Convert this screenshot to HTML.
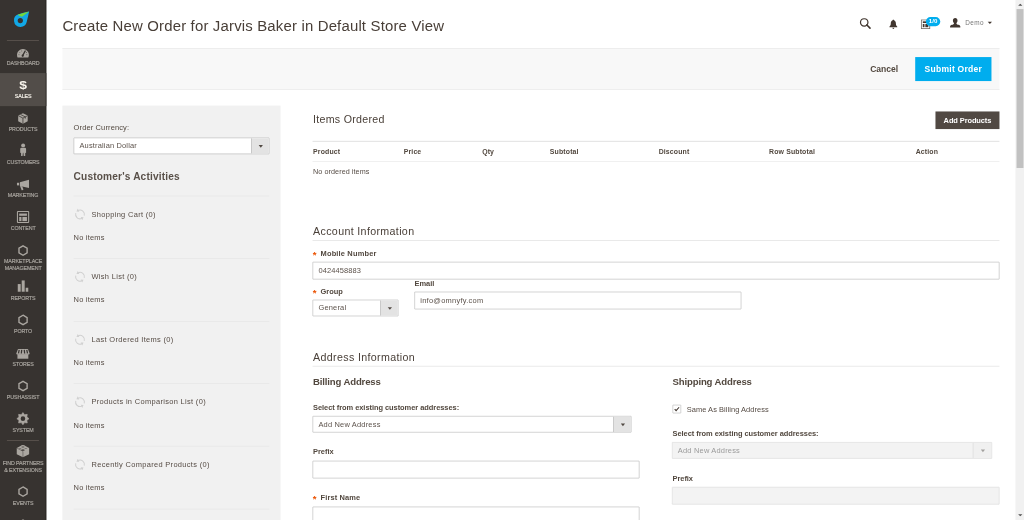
<!DOCTYPE html>
<html lang="en">
<head>
<meta charset="utf-8">
<title>Create New Order / Orders / Operations / Sales / Magento Admin</title>
<style>
*{box-sizing:border-box;margin:0;padding:0}
html,body{width:1024px;height:520px;overflow:hidden;background:#fff}
body{font-family:"Liberation Sans",Arial,sans-serif;color:#41362f}
#stage{position:absolute;left:0;top:0;width:1920px;height:975px;overflow:hidden;transform:scale(.533333);transform-origin:0 0;mix-blend-mode:multiply;background:#fff;font-size:14px;line-height:1.36}

/* ---------- left menu ---------- */
.menu{position:absolute;left:0;top:0;width:86.600px;height:975px;background:#373330}
.menu:after{content:"";position:absolute;right:0;top:0;width:2px;height:975px;background:rgba(20,16,14,.35);z-index:3}
.logo{display:block;height:75px;position:relative}
.logo svg{position:absolute;left:0;top:0}
.menu ul{list-style:none}
.menu li{position:relative}
.menu li a{display:block;min-height:62px;padding:12px 0 4.500px;text-align:center;color:#aaa6a0;font-size:10px;line-height:13.6px;letter-spacing:-.25px;-webkit-text-stroke:.3px currentColor;text-transform:uppercase;text-decoration:none;white-space:nowrap}
.menu li a .ic{display:block;height:24.5px;margin:0 auto}
.menu li a .ic svg{display:block;margin:0 auto}
.menu li.sep:before{content:"";position:absolute;left:13.300px;top:0;width:60px;height:1px;background:#736963}
.menu li.on a{background:#524d49;color:#f7f3eb}
.menu li.fp a{padding-bottom:10.300px}

/* ---------- page ---------- */
.page{position:absolute;left:117px;top:0;width:1757px}
.hdr{height:90px;position:relative}
.hdr h1{position:absolute;left:0;top:29.500px;font-size:28px;font-weight:400;line-height:38px;color:#483e37;letter-spacing:.32px;white-space:nowrap}
.hi{position:absolute;top:0}
.actions{height:78px;background:#f8f8f8;border-top:1px solid #e3e3e3;border-bottom:1px solid #e3e3e3;position:relative}
.btn-submit{position:absolute;right:15px;top:16px;width:143px;height:45px;background:#00adee;color:#fff;font-size:16px;font-weight:700;line-height:45px;text-align:center;letter-spacing:.48px}
.btn-cancel{position:absolute;right:190px;top:16px;height:45px;line-height:45px;font-size:16px;font-weight:700;color:#52483f}

.side{position:absolute;left:0;top:198px;width:409px;height:800px;background:#f1f1f1;padding:0 21px}
.main{position:absolute;left:469px;top:198px;width:1288px}

/* ---------- generic controls ---------- */
.abs{position:absolute;white-space:nowrap}
.lbl{position:absolute;white-space:nowrap;font-size:14px;font-weight:700;line-height:20px;color:#52483f;letter-spacing:-.1px}
.lbl .req{color:#eb5202;font-weight:700;font-size:18px;line-height:10px;display:inline-block;width:14px;position:relative;top:3.800px;left:-.500px;letter-spacing:0}
.txt{position:absolute;white-space:nowrap;font-size:14px;line-height:20px;color:#564c45;letter-spacing:.35px}
.inp{position:absolute;height:33px;background:#fff;border:1px solid #adadad;border-radius:1px;font-size:14px;line-height:31px;padding:0 10px;color:#5c524b;white-space:nowrap;overflow:hidden;letter-spacing:.3px}
.sel{position:absolute;height:30.400px;margin-top:.400px;background:#fff;border:1px solid #adadad;border-radius:1px;font-size:14px;line-height:28.400px;padding:0 10px;color:#5c524b;white-space:nowrap;overflow:hidden;letter-spacing:.35px}
.sel:after{content:"";position:absolute;right:0;top:0;width:32px;height:28.400px;background:#e3e3e3;border-left:1px solid #adadad}
.sel:before{content:"";position:absolute;right:11.500px;top:12.600px;z-index:2;border:4.500px solid transparent;border-top:5.400px solid #514943;border-bottom:0}
.dis{background:#f3f3f3;color:#9a9a9a;border-color:#d4d4d4}
.dis:after{background:#f0f0f0;border-left-color:#d4d4d4;width:33.500px}
.dis:before{border-top-color:#a3a19f}
.h2{position:absolute;white-space:nowrap;font-size:20px;font-weight:400;line-height:28px;color:#4a4039}
.h3{position:absolute;white-space:nowrap;font-size:18px;font-weight:700;line-height:26px;color:#52483f;letter-spacing:-.3px;margin-top:-1px}
.hr{position:absolute;left:0;right:0;height:1px;background:#d6d6d6}

.main .lbl,.main .h2,.main .h3,.main .th,.main .txt{margin-left:1px}
/* side */
.side .sh{position:absolute;left:21px;white-space:nowrap;font-size:19px;font-weight:700;line-height:26px;letter-spacing:.3px;color:#595049}
.side .dv{position:absolute;left:21px;width:367px;height:1px;background:#e3e3e3}
.side .it{position:absolute;left:54.500px;margin-top:-1px;font-size:14px;line-height:20px;white-space:nowrap;color:#564c45;letter-spacing:.6px}
.side .no{position:absolute;left:21px;font-size:14px;line-height:20px;white-space:nowrap;color:#564c45;letter-spacing:.38px}
.side .sp{position:absolute;left:23px;width:20px;height:20px}

/* table */
.th{position:absolute;top:76.300px;font-size:13px;font-weight:700;line-height:20px;white-space:nowrap;color:#52483f;letter-spacing:.25px}
.btn-add{position:absolute;right:0;top:11px;width:120px;height:33px;background:#514943;color:#fff;font-size:14px;font-weight:700;line-height:33px;text-align:center;letter-spacing:-.2px}
.chk{position:absolute;width:16px;height:16px;background:#fff;border:1px solid #adadad;border-radius:1px}

/* header icons + scrollbar (stage coordinates) */
.hic{position:absolute}
.badge{position:absolute;left:1736px;top:31.5px;width:27px;height:17px;border-radius:9px;background:#00adee;color:#fff;font-size:11.500px;font-weight:700;line-height:17.500px;text-align:center;letter-spacing:.1px}
.user{position:absolute;left:1810px;top:33px;font-size:12px;line-height:18px;color:#777;white-space:nowrap;letter-spacing:.75px}
.caret{position:absolute;left:1851.5px;top:41px;border:4.2px solid transparent;border-top:4.6px solid #41362f;border-bottom:0}
.sb{position:absolute;left:1904px;top:0;width:16px;height:975px;background:#f1f1f1}
.sb i{position:absolute;left:2.400px;top:17px;width:13px;height:298px;background:#c1c1c1}
.sb b{position:absolute;left:4.800px;width:0;height:0;border:4.200px solid transparent}
.sb b.up{border-bottom:4.600px solid #505050;border-top:0;top:6.800px}
.sb b.dn{top:964px;border-top:4.600px solid #505050;border-bottom:0}
</style>
</head>
<body>
<div id="stage">

<nav class="menu">
  <a class="logo">
    <svg width="87" height="75" viewBox="0 0 87 75">
      <path d="M54.600 21.500Q44 24 34.800 26.800A12.100 12.100 0 1 0 50.200 40.800Q52.600 31 54.600 21.500Z" fill="#12a8e6"/>
      <path d="M54.600 21.500Q43.500 24.200 33.200 27.600Q36.500 30.800 41.200 31.200Q48 26.800 54.600 21.500Z" fill="#74d83c"/>
      <circle cx="38.100" cy="38.600" r="4.900" fill="#373330"/>
    </svg>
  </a>
  <ul>
    <li class="sep"><a><span class="ic"><svg width="87" height="26" viewBox="0 12 87 26" overflow="visible"><path d="M33 32.900A11.100 11.100 0 1 1 53 32.900Z" fill="currentColor"/><path d="M42.3 29.6L47.2 20.6" stroke="#373330" stroke-width="2.6" stroke-linecap="round"/><circle cx="42.6" cy="29.4" r="2.1" fill="#373330"/><g fill="#373330"><circle cx="35.6" cy="27.6" r=".9"/><circle cx="37.2" cy="23.2" r=".9"/><circle cx="40.6" cy="20.4" r=".9"/><circle cx="50.4" cy="27.6" r=".9"/><circle cx="49.6" cy="23.6" r=".9"/></g></svg></span>Dashboard</a></li>
    <li class="on"><a><span class="ic"><svg width="87" height="26" viewBox="0 12 87 26" overflow="visible"><text x="36.200" y="30.700" textLength="14.200" lengthAdjust="spacingAndGlyphs" font-family="Liberation Sans,Arial,sans-serif" font-weight="700" font-size="21.500" fill="currentColor">$</text></svg></span>Sales</a></li>
    <li><a><span class="ic"><svg width="87" height="26" viewBox="0 12 87 26" overflow="visible"><g transform="translate(43 23) scale(.92) translate(-43 -23)"><path d="M43 12.3L52.7 17.3V28.6L43 33.7L33.3 28.6V17.3Z" fill="currentColor"/><path d="M33.3 17.3L43 22.4L52.7 17.3M43 22.4V33.7" fill="none" stroke="#373330" stroke-width="1.5"/><path d="M38 14.9L47.8 19.9V23.4" fill="none" stroke="#373330" stroke-width="1.5"/></g></svg></span>Products</a></li>
    <li><a><span class="ic"><svg width="87" height="26" viewBox="0 12 87 26" overflow="visible"><circle cx="43.4" cy="11.6" r="3.7" fill="currentColor"/><path d="M37.900 18.600Q37.900 16.100 40.400 16.100H46.400Q48.900 16.100 48.900 18.600V25.200L47.300 25.800V31.700H44.500L43.800 25.600H43L42.300 31.700H39.500V25.800L37.900 25.200Z" fill="currentColor"/></svg></span>Customers</a></li>
    <li><a><span class="ic"><svg width="87" height="26" viewBox="0 12 87 26" overflow="visible"><path d="M37.3 18.9L54.4 14.2V29.6L37.3 25.9Z" fill="currentColor"/><path d="M31.8 19.7H35.9V24.6H31.8Z" fill="currentColor"/><path d="M37.6 25.6L41.6 26.4L44 32.4Q43.2 33.8 40.6 33.6Z" fill="currentColor"/></svg></span>Marketing</a></li>
    <li><a><span class="ic"><svg width="87" height="26" viewBox="0 12 87 26" overflow="visible"><rect x="32.7" y="11.6" width="21" height="20.7" rx="1" fill="none" stroke="currentColor" stroke-width="2"/><rect x="36" y="15.4" width="14.5" height="4.2" fill="currentColor"/><rect x="36" y="21.8" width="4.2" height="7.8" fill="currentColor"/><rect x="42" y="21.8" width="8.5" height="7.8" fill="currentColor"/></svg></span>Content</a></li>
    <li><a><span class="ic"><svg width="87" height="26" viewBox="0 12 87 26" overflow="visible"><path d="M43.20 14.00 L50.82 18.40 L50.82 27.20 L43.20 31.60 L35.58 27.20 L35.58 18.40Z" fill="none" stroke="currentColor" stroke-width="2.600" stroke-linejoin="miter"/></svg></span>Marketplace<br>Management</a></li>
    <li><a><span class="ic"><svg width="87" height="26" viewBox="0 12 87 26" overflow="visible"><rect x="33.3" y="17.6" width="5.5" height="14.4" fill="currentColor"/><rect x="40.7" y="10.8" width="5.6" height="21.2" fill="currentColor"/><rect x="48.2" y="24.5" width="4.8" height="7.5" fill="currentColor"/></svg></span>Reports</a></li>
    <li><a><span class="ic"><svg width="87" height="26" viewBox="0 12 87 26" overflow="visible"><path d="M43.20 14.00 L50.82 18.40 L50.82 27.20 L43.20 31.60 L35.58 27.20 L35.58 18.40Z" fill="none" stroke="currentColor" stroke-width="2.600" stroke-linejoin="miter"/></svg></span>Porto</a></li>
    <li><a><span class="ic"><svg width="87" height="26" viewBox="0 12 87 26" overflow="visible"><g transform="translate(0 2)"><path d="M33.800 13.200H52.400L55.600 22Q55.600 23.800 53.600 23.800H32.400Q30.500 23.800 30.500 22Z" fill="currentColor"/><path d="M32.700 23H53.100V31.600H32.700Z" fill="currentColor"/><path d="M36 15L34.600 21.800M40.700 15L40 21.800M45.500 15L46.200 21.800M50.200 15L51.600 21.800" stroke="#373330" stroke-width="2.300"/></g></svg></span>Stores</a></li>
    <li><a><span class="ic"><svg width="87" height="26" viewBox="0 12 87 26" overflow="visible"><path d="M43.20 14.00 L50.82 18.40 L50.82 27.20 L43.20 31.60 L35.58 27.20 L35.58 18.40Z" fill="none" stroke="currentColor" stroke-width="2.600" stroke-linejoin="miter"/></svg></span>PushAssist</a></li>
    <li><a><span class="ic"><svg width="87" height="26" viewBox="0 12 87 26" overflow="visible"><path d="M43.00 10.60 L46.06 14.61 L51.06 13.94 L50.39 18.94 L54.40 22.00 L50.39 25.06 L51.06 30.06 L46.06 29.39 L43.00 33.40 L39.94 29.39 L34.94 30.06 L35.61 25.06 L31.60 22.00 L35.61 18.94 L34.94 13.94 L39.94 14.61Z" fill="currentColor" stroke="currentColor" stroke-width="1.200" stroke-linejoin="round"/><circle cx="43" cy="22" r="4.300" fill="#373330"/></svg></span>System</a></li>
    <li class="sep fp"><a><span class="ic"><svg width="87" height="26" viewBox="0 12 87 26" overflow="visible"><path d="M43 9.2Q46 9.2 47.6 11.4L54.6 15V26.6L43 32.4L31.4 26.6V15L38.4 11.4Q40 9.2 43 9.2Z" fill="currentColor"/><path d="M43 21.4V32M32 15.4L43 21" stroke="#373330" stroke-width="1.1" fill="none" opacity=".75"/><ellipse cx="43" cy="19" rx="3.3" ry="1.5" fill="#373330" opacity=".8"/><ellipse cx="43" cy="13" rx="3.1" ry="1.3" fill="#373330" opacity=".55"/><ellipse cx="37.6" cy="16" rx="2.6" ry="1.1" fill="#373330" opacity=".45"/><ellipse cx="48.4" cy="16" rx="2.6" ry="1.1" fill="#373330" opacity=".45"/></svg></span>Find Partners<br>&amp; Extensions</a></li>
    <li><a><span class="ic"><svg width="87" height="26" viewBox="0 12 87 26" overflow="visible"><path d="M43.20 14.00 L50.82 18.40 L50.82 27.20 L43.20 31.60 L35.58 27.20 L35.58 18.40Z" fill="none" stroke="currentColor" stroke-width="2.600" stroke-linejoin="miter"/></svg></span>Events</a></li>
    <li><a><span class="ic"><svg width="87" height="26" viewBox="0 12 87 26" overflow="visible"><path d="M43.20 14.00 L50.82 18.40 L50.82 27.20 L43.20 31.60 L35.58 27.20 L35.58 18.40Z" fill="none" stroke="currentColor" stroke-width="2.600" stroke-linejoin="miter"/></svg></span></a></li>
  </ul>
</nav>

<div class="page">
  <div class="hdr">
    <h1>Create New Order for Jarvis Baker in Default Store View</h1>
  </div>
  <div class="actions">
    <span class="btn-cancel">Cancel</span>
    <span class="btn-submit">Submit Order</span>
  </div>
  <aside class="side">
    <span class="lbl" style="left:21px;top:31px;font-weight:400;letter-spacing:.26px">Order Currency:</span>
    <span class="sel" style="left:21px;top:60px;width:367px;letter-spacing:.3px">Australian Dollar</span>
    <span class="sh" style="top:120.200px">Customer's Activities</span>
    <i class="dv" style="top:169px"></i>
    <span class="sp" style="top:194px"><svg width="20" height="20" viewBox="0 0 20 20" style="transform:rotate(28deg)"><path d="M3.400 5A8.300 8.300 0 0 1 18.100 8.200M16.600 15A8.300 8.300 0 0 1 1.900 11.800" fill="none" stroke="#d0d0d0" stroke-width="1.900"/><path d="M1.200 2.400L6.400 6.200L1.600 8.400ZM18.800 17.600L13.600 13.800L18.400 11.600Z" fill="#d0d0d0"/></svg></span>
    <span class="it" style="top:194px">Shopping Cart (0)</span>
    <span class="no" style="top:237px">No items</span>
    <i class="dv" style="top:286px"></i>
    <span class="sp" style="top:311px"><svg width="20" height="20" viewBox="0 0 20 20" style="transform:rotate(28deg)"><path d="M3.400 5A8.300 8.300 0 0 1 18.100 8.200M16.600 15A8.300 8.300 0 0 1 1.900 11.800" fill="none" stroke="#d0d0d0" stroke-width="1.900"/><path d="M1.200 2.400L6.400 6.200L1.600 8.400ZM18.800 17.600L13.600 13.800L18.400 11.600Z" fill="#d0d0d0"/></svg></span>
    <span class="it" style="top:311px">Wish List (0)</span>
    <span class="no" style="top:354px">No items</span>
    <i class="dv" style="top:404px"></i>
    <span class="sp" style="top:429px"><svg width="20" height="20" viewBox="0 0 20 20" style="transform:rotate(28deg)"><path d="M3.400 5A8.300 8.300 0 0 1 18.100 8.200M16.600 15A8.300 8.300 0 0 1 1.900 11.800" fill="none" stroke="#d0d0d0" stroke-width="1.900"/><path d="M1.200 2.400L6.400 6.200L1.600 8.400ZM18.800 17.600L13.600 13.800L18.400 11.600Z" fill="#d0d0d0"/></svg></span>
    <span class="it" style="top:429px">Last Ordered Items (0)</span>
    <span class="no" style="top:472px">No items</span>
    <i class="dv" style="top:521px"></i>
    <span class="sp" style="top:546px"><svg width="20" height="20" viewBox="0 0 20 20" style="transform:rotate(28deg)"><path d="M3.400 5A8.300 8.300 0 0 1 18.100 8.200M16.600 15A8.300 8.300 0 0 1 1.900 11.800" fill="none" stroke="#d0d0d0" stroke-width="1.900"/><path d="M1.200 2.400L6.400 6.200L1.600 8.400ZM18.800 17.600L13.600 13.800L18.400 11.600Z" fill="#d0d0d0"/></svg></span>
    <span class="it" style="top:546px">Products in Comparison List (0)</span>
    <span class="no" style="top:589px">No items</span>
    <i class="dv" style="top:638px"></i>
    <span class="sp" style="top:663px"><svg width="20" height="20" viewBox="0 0 20 20" style="transform:rotate(28deg)"><path d="M3.400 5A8.300 8.300 0 0 1 18.100 8.200M16.600 15A8.300 8.300 0 0 1 1.900 11.800" fill="none" stroke="#d0d0d0" stroke-width="1.900"/><path d="M1.200 2.400L6.400 6.200L1.600 8.400ZM18.800 17.600L13.600 13.800L18.400 11.600Z" fill="#d0d0d0"/></svg></span>
    <span class="it" style="top:663px">Recently Compared Products (0)</span>
    <span class="no" style="top:706px">No items</span>
    <i class="dv" style="top:756px"></i>
  </aside>
  <section class="main">
    <span class="h2" style="left:0;top:12px;letter-spacing:.49px">Items Ordered</span>
    <span class="btn-add">Add Products</span>
    <i class="hr" style="top:66px;background:#e3e3e3;height:2px"></i>
    <span class="th" style="left:0">Product</span>
    <span class="th" style="left:170px">Price</span>
    <span class="th" style="left:317px">Qty</span>
    <span class="th" style="left:444px">Subtotal</span>
    <span class="th" style="left:648px">Discount</span>
    <span class="th" style="left:855px">Row Subtotal</span>
    <span class="th" style="left:1130px">Action</span>
    <i class="hr" style="top:104px;background:#e3e3e3"></i>
    <span class="txt" style="left:0;top:115px;font-size:13.500px;letter-spacing:.13px">No ordered items</span>

    <span class="h2" style="left:0;top:222px;letter-spacing:.64px">Account Information</span>
    <i class="hr" style="top:252px"></i>
    <span class="lbl" style="left:0;top:267px;letter-spacing:.3px"><span class="req">*</span>Mobile Number</span>
    <span class="inp" style="left:0;top:293px;width:1288px;letter-spacing:.2px">0424458883</span>
    <span class="lbl" style="left:0;top:338px"><span class="req">*</span>Group</span>
    <span class="sel" style="left:0;top:364px;width:161px">General</span>
    <span class="lbl" style="left:190.300px;top:323px">Email</span>
    <span class="inp" style="left:191px;top:349.300px;width:613px;letter-spacing:.48px">info@omnyfy.com</span>

    <span class="h2" style="left:0;top:457px;letter-spacing:.64px">Address Information</span>
    <i class="hr" style="top:488px"></i>

    <span class="h3" style="left:0;top:506px">Billing Address</span>
    <span class="lbl" style="left:0;top:556px">Select from existing customer addresses:</span>
    <span class="sel" style="left:0;top:582px;width:598px">Add New Address</span>
    <span class="lbl" style="left:0;top:638px">Prefix</span>
    <span class="inp" style="left:0;top:666px;width:613px"></span>
    <span class="lbl" style="left:0;top:725px;letter-spacing:.2px"><span class="req">*</span>First Name</span>
    <span class="inp" style="left:0;top:751.500px;width:613px"></span>

    <span class="h3" style="left:674px;top:506px">Shipping Address</span>
    <span class="chk" style="left:674.500px;top:561px"><svg width="14" height="14" viewBox="0 0 14 14"><path d="M3 7.2l2.7 2.8L11.3 3.6" fill="none" stroke="#41362f" stroke-width="2"/></svg></span>
    <span class="txt" style="left:700.500px;top:560px;letter-spacing:.1px">Same As Billing Address</span>
    <span class="lbl" style="left:674px;top:604px">Select from existing customer addresses:</span>
    <span class="sel dis" style="left:674px;top:631px;width:599.500px">Add New Address</span>
    <span class="lbl" style="left:674px;top:688px">Prefix</span>
    <span class="inp dis" style="left:674px;top:715px;width:614px"></span>
  </section>
</div>

<svg class="hic" style="left:1611px;top:34px" width="23" height="21" viewBox="0 0 23 21"><circle cx="9.400" cy="7.900" r="7" fill="none" stroke="#41362f" stroke-width="2.300"/><path d="M14.400 12.800L20.300 18.700" stroke="#41362f" stroke-width="3" stroke-linecap="round"/></svg>
<svg class="hic" style="left:1665px;top:35.600px;transform:scaleX(.9)" width="20" height="19" viewBox="0 0 20 19"><path d="M10 0.6c.9 0 1.4.6 1.4 1.4 2.6.8 3.9 3 3.9 5.800 0 3.400 1 4.600 2.800 6.100v1.100H1.900v-1.100C3.700 12.400 4.700 11.200 4.700 7.800c0-2.800 1.300-5 3.900-5.800C8.600 1.200 9.100.6 10 .6Z" fill="#41362f"/><path d="M7.900 16.200h4.200a2.100 2.100 0 0 1-4.200 0Z" fill="#41362f"/></svg>
<svg class="hic" style="left:1726px;top:35.500px" width="20" height="19" viewBox="0 0 20 19"><rect x="1.500" y="1.300" width="15.800" height="16.400" fill="none" stroke="#6b625c" stroke-width="1.500"/><rect x="4.200" y="4" width="10.400" height="3.200" fill="#41362f"/><rect x="4.200" y="9" width="3.200" height="6" fill="#41362f"/><rect x="9" y="9" width="5.600" height="6" fill="#41362f"/></svg>
<span class="badge">1/0</span>
<svg class="hic" style="left:1780px;top:32.500px" width="22" height="20" viewBox="0 0 22 20"><path d="M11 .6c2.700 0 4.300 2 4.300 4.700 0 2-.800 3.700-1.900 4.700v1.300c0 .900 1.500 1.400 3.700 2.300 2.300.900 3.500 1.500 3.500 3.200v1.800H1.400v-1.800c0-1.700 1.200-2.300 3.500-3.200 2.200-.900 3.700-1.400 3.700-2.300V10C7.500 9 6.700 7.300 6.700 5.300 6.700 2.600 8.300.6 11 .6Z" fill="#41362f"/></svg>
<span class="user">Demo</span>
<i class="caret"></i>
<div class="sb"><b class="up"></b><i></i><b class="dn"></b></div>

</div>
</body>
</html>
